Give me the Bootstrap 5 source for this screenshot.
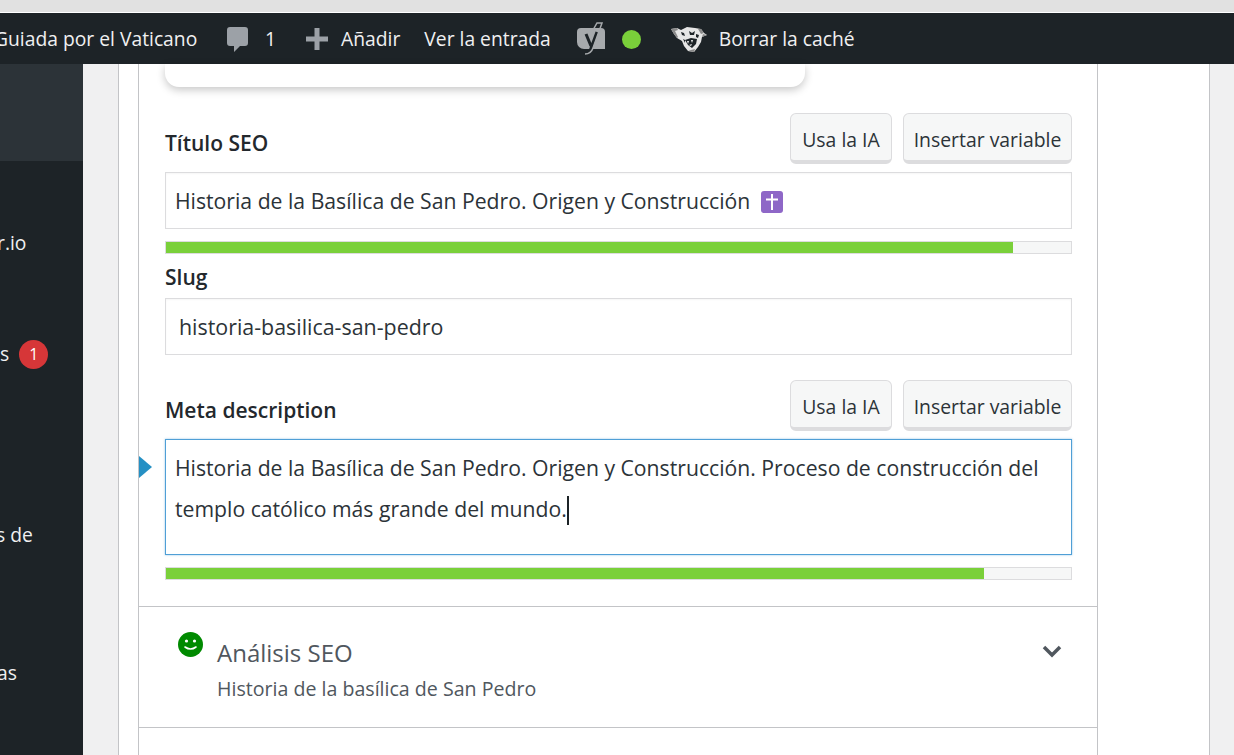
<!DOCTYPE html>
<html lang="es">
<head>
    <meta charset="UTF-8">
    <meta name="viewport" content="width=device-width, initial-scale=1.0">
    <title>Editor SEO</title>
    <link href="https://cdn.jsdelivr.net/npm/bootstrap@5.3.0/dist/css/bootstrap.min.css" rel="stylesheet">
    <style>
        html, body { height: 755px; overflow: hidden; }
        body { background: #f0f0f1; font-family: "Open Sans", "Noto Sans", sans-serif; font-size: 19.3px; color: #2c3338; }
        .chrome-strip { height: 13px; background: #e1e1e1; border-bottom: 1px solid #fff; }
        .admin-bar { height: 51px; padding-top: 2px; background: #1d2327; color: #f0f0f1; white-space: nowrap; overflow: hidden; }
        .bar-title { margin-left: -6px; width: 204px; flex: none; }
        .bar-comment { width: 21px; margin-left: 29px; margin-right: 17px; margin-top: -1px; }
        .bar-plus { margin-left: 30px; margin-right: 13px; margin-top: -1px; }
        .bar-view { margin-left: 24px; }
        .bar-yoast { margin-left: 26px; margin-right: 17px; margin-top: -3px; }
        .dot-live { width: 19px; height: 19px; background: #7ad03a; flex: none; margin-right: 30px; margin-top: -1px; }
        .jaguar { margin-right: 12px; margin-top: -1px; }
        .page-row { height: 691px; }
        .side-menu { width: 83px; background: #1d2327; color: #f0f0f1; overflow: hidden; white-space: nowrap; }
        .side-current { height: 97px; background: #2c3338; }
        .side-item { height: 30px; line-height: 30px; }
        .side-count { width: 29px; height: 29px; background: #d63638; color: #fff; font-size: 16px; line-height: 29px; text-align: center; }
        .side-one { margin-top: 67px; margin-left: -3px; }
        .side-two { margin-top: 81px; gap: 10px; }
        .side-three { margin-top: 151px; margin-left: -4px; }
        .side-four { margin-top: 108px; margin-left: -3px; }
        .content-gutter { padding: 0 24px 0 35px; }
        .post-wrap { background: #fff; border-left: 1px solid #c3c4c7; border-right: 1px solid #c3c4c7; padding: 0 111px 0 19px; height: 100%; }
        .seo-box { width: 960px; background: #fff; border-left: 1px solid #c3c4c7; border-right: 1px solid #c3c4c7; height: 100%; }
        .seo-fields { position: relative; padding: 0 25px 26px 26px; border-bottom: 1px solid #c3c4c7; }
        .preview-end { width: 640px; height: 23px; background: #fff; border-radius: 0 0 14px 14px; box-shadow: 0 3px 8px rgba(0,0,0,.22); margin-bottom: 26px; }
        .field-head { height: 51px; margin-bottom: 8px; }
        .field-label { font-size: 21px; font-weight: 600; color: #23282d; padding-top: 15px; }
        .tool-group { gap: 11px; }
        .tool-btn { height: 51px; padding: 0; font-size: 19.4px; line-height: 52px; color: #2c3338; background: #f6f7f7; border: 1px solid #dcdcde; border-bottom: 4px solid #dcdcde; border-radius: 6px; }
        .btn-ai { width: 102px; }
        .btn-var { width: 169px; }
        .field-box { height: 57px; padding: 0 9px; border: 1px solid #dcdcde; border-radius: 0; line-height: 56px; font-size: 21.2px; color: #2c3338; box-shadow: inset 0 1px 2px rgba(0,0,0,.04); white-space: nowrap; }
        .slug-box { padding-left: 13px; font-size: 21.4px; }
        .meta-box { height: 116px; padding: 7px 9px; border-color: #4f9fd6; line-height: 41px; box-shadow: 0 0 2px rgba(79,159,214,.6); }
        .type-caret { display: inline-block; width: 2px; height: 29px; background: #1d2327; vertical-align: -8px; }
        .score-bar { height: 13px; margin-top: 12px; background: #f6f7f7; border: 1px solid #dcdcde; border-radius: 0; }
        .score-bar .progress-bar { background: #7ad03a; }
        .slug-label { height: 44px; padding-top: 8px; font-size: 21px; font-weight: 600; color: #23282d; }
        .cross-tile { width: 22px; height: 22px; vertical-align: -4px; margin-left: 5px; }
        .meta-head { margin-top: 25px; }
        .focus-arrow { position: absolute; left: 0; top: 392px; width: 13px; height: 22px; }
        .analysis-row { height: 121px; padding: 25px 35px 0 39px; border-bottom: 1px solid #c3c4c7; color: #50575e; }
        .analysis-body { margin-left: 14px; }
        .analysis-title { font-size: 24px; line-height: 32px; margin-top: 5px; }
        .analysis-sub { font-size: 19.6px; line-height: 30px; margin-top: 5px; }
        .chevron-open { margin-top: 13px; }
    </style>
</head>
<body>
    <div class="chrome-strip"></div>

    <!-- barra de admin -->
    <div class="admin-bar d-flex align-items-center">
        <span class="bar-title">Guiada por el Vaticano</span>
        <svg class="bar-comment" viewBox="0 0 21 25" height="25"><path fill="#9ca1a7" d="M3 0h15a3 3 0 0 1 3 3v13a3 3 0 0 1-3 3h-5l-6 6v-6H3a3 3 0 0 1-3-3V3a3 3 0 0 1 3-3z"/></svg>
        <span>1</span>
        <svg class="bar-plus" viewBox="0 0 22 22" width="22" height="22"><path fill="#9ca1a7" d="M8.500 0h5v8.500H22v5h-8.500V22h-5v-8.500H0v-5h8.500z"/></svg>
        <span>Añadir</span>
        <span class="bar-view">Ver la entrada</span>
        <svg class="bar-yoast" viewBox="0 0 28 33" width="28" height="33">
            <path fill="#a7aaad" d="M4 6h20a4 4 0 0 1 4 4v17H7a7 7 0 0 1-7-7V10a4 4 0 0 1 4-4z"/>
            <path fill="none" stroke="#1d2327" stroke-width="3" d="M9 12l5 12M20 10l-7 19q-1 2-5 2"/>
            <path fill="none" stroke="#a7aaad" stroke-width="1.500" d="M16 8l4-7h5l-9 25q-2 6-8 6"/>
        </svg>
        <span class="rounded-circle dot-live"></span>
        <svg class="jaguar" viewBox="0 0 36 27" width="36" height="27">
            <path fill="#e6e6e6" d="M0 3l6-1 4 2 6-3 8 1 6 1 3 4 3 2-5 2-1 5-3 5-4 5-6-1-4-5-2-5-5-3-3-4z"/>
            <path fill="#8a8a8a" d="M0 3l6-1 1 2-3 1 3 6-1 1-3-4zM27 3l3 0 3 4-3 1zM32 8l4 1-5 2zM17 25l6 1 1-3-4 1z"/>
            <path fill="#1d2327" d="M14 14l6-2 6 1-1 5-4 4-4-3zM10 6l3 1 1 3-3-1zM18 5l3 2 3-2-1 4-4 0zM25 8l3 1-1 3-2-1zM12 13l2 1 0 3z"/>
            <path fill="#f4f4f4" d="M16 15l1 3 1-3zM20 14l1 3 1-3zM18 19l2 1 1-2z"/>
        </svg>
        <span>Borrar la caché</span>
    </div>

    <div class="page-row d-flex">
        <!-- menu lateral -->
        <div class="side-menu flex-shrink-0">
            <div class="side-current"></div>
            <div class="side-item side-one">r.io</div>
            <div class="side-item d-flex align-items-center side-two"><span>s</span><span class="side-count rounded-circle">1</span></div>
            <div class="side-item side-three">s de</div>
            <div class="side-item side-four">as</div>
        </div>

        <div class="content-gutter flex-grow-1">
            <div class="post-wrap">
                <div class="seo-box">
                    <div class="seo-fields">
                        <div class="preview-end"></div>

                        <div class="field-head d-flex justify-content-between">
                            <span class="field-label">Título SEO</span>
                            <div class="d-flex tool-group">
                                <button type="button" class="btn tool-btn btn-ai">Usa la IA</button>
                                <button type="button" class="btn tool-btn btn-var">Insertar variable</button>
                            </div>
                        </div>
                        <div class="form-control field-box">Historia de la Basílica de San Pedro. Origen y Construcción <svg class="cross-tile" viewBox="0 0 22 22"><rect width="22" height="22" rx="3" fill="#8e67c7"/><path fill="#fff" d="M10 3h2v4.500h5v2h-5V19h-2V9.500H5v-2h5z"/></svg></div>
                        <div class="progress score-bar"><div class="progress-bar" style="width: 93.6%"></div></div>

                        <div class="slug-label">Slug</div>
                        <div class="form-control field-box slug-box">historia-basilica-san-pedro</div>

                        <div class="field-head meta-head d-flex justify-content-between">
                            <span class="field-label">Meta description</span>
                            <div class="d-flex tool-group">
                                <button type="button" class="btn tool-btn btn-ai">Usa la IA</button>
                                <button type="button" class="btn tool-btn btn-var">Insertar variable</button>
                            </div>
                        </div>
                        <svg class="focus-arrow" viewBox="0 0 13 22"><path fill="#2590c4" d="M0 0l13 11L0 22z"/></svg>
                        <div class="form-control field-box meta-box">Historia de la Basílica de San Pedro. Origen y Construcción. Proceso de construcción del<br>templo católico más grande del mundo.<span class="type-caret"></span></div>
                        <div class="progress score-bar"><div class="progress-bar" style="width: 90.4%"></div></div>
                    </div>

                    <div class="analysis-row d-flex">
                        <svg viewBox="0 0 25 25" width="25" height="25" class="flex-shrink-0">
                            <circle cx="12.500" cy="12.500" r="12.500" fill="#008a00"/>
                            <circle cx="8.500" cy="9" r="1.600" fill="#fff"/><circle cx="16.500" cy="9" r="1.600" fill="#fff"/>
                            <path fill="none" stroke="#fff" stroke-width="1.600" stroke-linecap="round" d="M7 15q5.500 4 11 0"/>
                        </svg>
                        <div class="flex-grow-1 analysis-body">
                            <div class="analysis-title">Análisis SEO</div>
                            <div class="analysis-sub">Historia de la basílica de San Pedro</div>
                        </div>
                        <svg viewBox="0 0 20 13" width="20" height="13" class="chevron-open"><path fill="none" stroke="#50575e" stroke-width="3.500" d="M2 2l8 8 8-8"/></svg>
                    </div>
                </div>
            </div>
        </div>
    </div>

    <script src="https://cdn.jsdelivr.net/npm/bootstrap@5.3.0/dist/js/bootstrap.bundle.min.js"></script>
</body>
</html>
